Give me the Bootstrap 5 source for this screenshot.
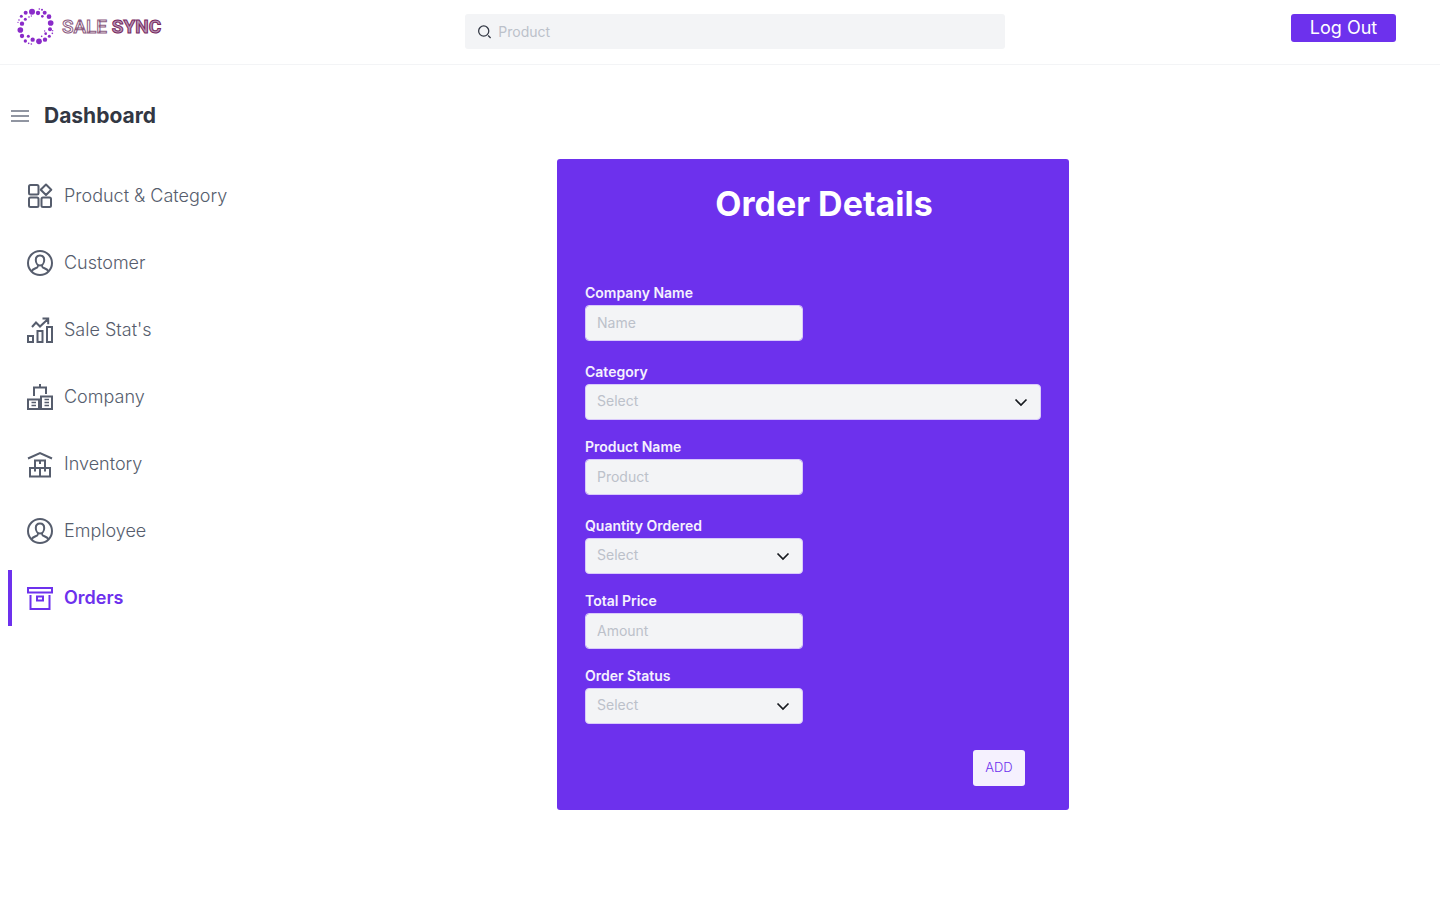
<!DOCTYPE html>
<html lang="en">
<head>
<meta charset="utf-8">
<meta name="viewport" content="width=device-width, initial-scale=1">
<title>Sale Sync - Orders</title>
<link href="https://cdn.jsdelivr.net/npm/bootstrap@5.3.0/dist/css/bootstrap.min.css" rel="stylesheet">
<style>
  :root { --brand: #6d31ed; --ink: #565d6d; --field: #f3f4f6; --hint: #bcc1ca; }
  body { font-family: Inter, "Liberation Sans", sans-serif; color: #323743; background: #fff; }
  .topbar { display: grid; grid-template-columns: 31fr 36fr 29fr; min-height: 65px; border-bottom: 1px solid #f3f4f6; }
  .brand-link { padding: 8px 0 0 17px; gap: 7px; align-self: start; height: 46px; }
  .wordmark { font: 500 19px/36px Roboto, sans-serif; color: #fff; -webkit-text-stroke: 1px #8b5a80; }
  .wordmark b { color: #b995b4; -webkit-text-stroke-color: #75285f; }
  .search-box { margin-top: 14px; height: 35px; background: var(--field); border-radius: 3px; padding: 0 12px; gap: 6px; }
  .form-control, .form-select { font-size: 14px; line-height: 22px; color: #171a1f; }
  .form-control::placeholder { color: var(--hint); opacity: 1; }
  .search-box .form-control { background: transparent; }
  .btn-logout { margin: 14px 44px 0 0; width: 105px; height: 28px; padding: 0; font-size: 18px; line-height: 26px; font-weight: 400; border-radius: 3px; border: 0; color: #fff; background: var(--brand); }
  .btn-logout:hover { background: #5a1fd6; color: #fff; }
  .sidebar { width: 272px; padding: 36px 8px 0; }
  .side-title { font-size: 21px; line-height: 30px; font-weight: 700; margin: 0; }
  .menu-btn { width: 24px; height: 24px; padding: 0; border: 0; line-height: 0; }
  .side-head { gap: 12px; margin-bottom: 37px; }
  .side-nav { gap: 11px; }
  .side-nav .nav-link { height: 56px; padding: 0 0 2px 14px; gap: 10px; border-left: 4px solid transparent; color: var(--ink); font-size: 18px; font-weight: 300; }
  .side-nav .nav-link.active { color: var(--brand); border-color: var(--brand); font-weight: 600; }
  .side-nav svg { width: 28px; height: 28px; margin-top: 2px; flex: none; fill: none; stroke: currentColor; stroke-width: 2; }
  .content { padding: 94px 86px 90px 0; }
  .order-card { width: 100%; max-width: 512px; background: var(--brand); border: 0; border-radius: 3px; padding: 20px 28px 24px; }
  .order-card h1 { font-size: 34px; line-height: 50px; font-weight: 700; color: #fff; margin: 0 0 53px; padding-left: 22px; }
  .order-card .form-label { display: block; margin: 0 0 2px; font-size: 14px; line-height: 21px; font-weight: 600; color: #f5f1fe; }
  .order-card .form-control, .order-card .form-select { height: 36px; padding: 0 11px 2px; border: 1px solid #d9c9fb; border-radius: 4px; background-color: var(--field); }
  .order-card .form-select { color: var(--hint); background-size: 14px 14px; background-position: right 12px center;
    background-image: url("data:image/svg+xml,%3Csvg xmlns='http://www.w3.org/2000/svg' viewBox='0 0 14 14'%3E%3Cpath fill='none' stroke='%23171a1f' stroke-width='1.7' d='M1.5 4.5 7 10l5.5-5.5'/%3E%3C/svg%3E"); }
  .half { width: 218px; max-width: 100%; }
  .gap-after { margin-bottom: 16px; }
  .gap-after-lg { margin-bottom: 20px; }
  .btn-add { width: 52px; height: 36px; padding: 0; margin: 26px 16px 0 0; font-size: 13px; font-weight: 300; color: var(--brand); background: #f5f1fe; border: 0; border-radius: 3px; }
  .btn-add:hover { background: #e5dafc; color: var(--brand); }
</style>
</head>
<body>
<header class="topbar">
  <a href="#" class="brand-link d-flex align-items-center text-decoration-none">
    <svg width="38" height="38" viewBox="51 24 114 114" fill="#8a2bc9" aria-hidden="true">
      <circle cx="96" cy="35" r="9"/><circle cx="152" cy="69" r="8.5"/><circle cx="61" cy="90" r="8.5"/><circle cx="117" cy="124" r="8.5"/>
      <circle cx="77" cy="38" r="6"/><circle cx="114" cy="39" r="6.5"/><circle cx="147" cy="50" r="7"/><circle cx="66" cy="71" r="6.5"/><circle cx="150" cy="88" r="6"/><circle cx="66" cy="108" r="6.5"/><circle cx="98" cy="119" r="6.5"/><circle cx="135" cy="119" r="6.5"/><circle cx="76" cy="123" r="5"/><circle cx="134" cy="38" r="6"/>
      <circle cx="64" cy="49" r="4.5"/><circle cx="76" cy="58" r="4.5"/><circle cx="127" cy="49" r="4"/><circle cx="148" cy="109" r="4.5"/><circle cx="137" cy="101" r="4"/><circle cx="85" cy="109" r="4.5"/>
      <circle cx="118" cy="27" r="2.5"/><circle cx="126" cy="29" r="3"/><circle cx="57" cy="60" r="2.5"/><circle cx="54" cy="67" r="2"/><circle cx="87" cy="51" r="2.5"/><circle cx="94" cy="48" r="2"/><circle cx="158" cy="92" r="2"/><circle cx="157" cy="100" r="2.5"/><circle cx="125" cy="109" r="2.5"/><circle cx="134" cy="93" r="2"/><circle cx="86" cy="130" r="2.5"/><circle cx="94" cy="132" r="2.5"/>
    </svg>
    <span class="wordmark">SALE <b>SYNC</b></span>
  </a>
  <form class="search-box d-flex align-items-center" role="search">
    <svg width="16" height="16" viewBox="0 0 16 16" fill="none" stroke="#323743" stroke-width="1.3" aria-hidden="true"><circle cx="7" cy="7" r="5.3"/><path d="M11.6 11.6 14.2 14.2"/></svg>
    <input type="search" class="form-control border-0 shadow-none p-0" placeholder="Product" aria-label="Search products">
  </form>
  <div class="text-end"><button type="button" class="btn btn-logout">Log Out</button></div>
</header>

<div class="d-flex">
  <aside class="sidebar flex-shrink-0">
    <div class="side-head d-flex align-items-center">
      <button type="button" class="btn menu-btn" aria-label="Toggle menu"><svg width="24" height="24" viewBox="0 0 24 24" fill="none" stroke="#9095a1" stroke-width="2" aria-hidden="true"><path d="M3 7h18M3 12h18M3 17h18"/></svg></button>
      <h2 class="side-title">Dashboard</h2>
    </div>
    <nav class="side-nav nav flex-column" aria-label="Main">
      <a class="nav-link d-flex align-items-center" href="#"><svg viewBox="0 0 28 28" aria-hidden="true"><rect x="3" y="3" width="9.5" height="9.5" rx="1.5"/><rect x="3" y="15.5" width="9.5" height="9.5" rx="1.5"/><rect x="15.500" y="15.5" width="9.5" height="9.5" rx="1.5"/><path stroke-linejoin="round" d="M20 2.500 25.300 7.700 20 13 14.700 7.700Z"/></svg>Product &amp; Category</a>
      <a class="nav-link d-flex align-items-center" href="#"><svg viewBox="0 0 28 28" aria-hidden="true"><circle cx="14" cy="14" r="12"/><path d="M14 6.500c-2.700 0-4.200 1.800-4.200 4.500 0 3.200 1.900 5.500 4.200 5.500s4.200-2.300 4.200-5.500c0-2.700-1.500-4.500-4.200-4.500ZM5.500 22.200c1.200-2 3.600-2.600 5.500-3.600.8-.5 1-1.200 1-2.600M22.500 22.200c-1.200-2-3.600-2.600-5.500-3.600-.8-.5-1-1.200-1-2.600"/></svg>Customer</a>
      <a class="nav-link d-flex align-items-center" href="#"><svg viewBox="0 0 28 28" aria-hidden="true"><path d="M2 20h5v6H2ZM11.500 15h5v11h-5ZM21 11h5v15h-5ZM6 11l4-4.500 4 4L22 3M16.500 2.500H22.200V8.200"/></svg>Sale Stat's</a>
      <a class="nav-link d-flex align-items-center" href="#"><svg viewBox="0 0 28 28" aria-hidden="true"><path d="M2 16.500h11V26H2ZM15 13.500h11V26H15ZM14 1v3M8 13V4.500H20V11M1 26H27"/><path stroke-width="1.5" d="M5.500 19.500H10M5.500 22.500H10M18.500 16.500H23M18.500 19.500H23M18.500 22.500H23"/></svg>Company</a>
      <a class="nav-link d-flex align-items-center" href="#"><svg viewBox="0 0 28 28" aria-hidden="true"><path d="M2 8.500 14 3 26 8.500M9 18V10.500H19V18M4 18H24V26.500H4ZM14 18V26.500M14 10.500V14M9 18V21.500M19 18V21.500"/></svg>Inventory</a>
      <a class="nav-link d-flex align-items-center" href="#"><svg viewBox="0 0 28 28" aria-hidden="true"><circle cx="14" cy="14" r="12"/><path d="M14 6.500c-2.700 0-4.200 1.800-4.200 4.500 0 3.200 1.900 5.500 4.200 5.500s4.200-2.300 4.200-5.500c0-2.700-1.500-4.500-4.200-4.500ZM5.500 22.200c1.200-2 3.600-2.600 5.500-3.600.8-.5 1-1.200 1-2.600M22.500 22.200c-1.200-2-3.600-2.600-5.500-3.600-.8-.5-1-1.200-1-2.600"/></svg>Employee</a>
      <a class="nav-link active d-flex align-items-center" href="#" aria-current="page"><svg viewBox="0 0 28 28" aria-hidden="true"><path d="M2 4H26V8.500H2ZM4.500 11V25H23.500V11M11 12.500H17V16.500H11Z"/></svg>Orders</a>
    </nav>
  </aside>

  <main class="content flex-grow-1 d-flex justify-content-center align-items-start">
    <form class="order-card card">
      <h1 class="text-center">Order Details</h1>
      <div class="half gap-after-lg">
        <label class="form-label" for="company">Company Name</label>
        <input type="text" class="form-control" id="company" placeholder="Name">
      </div>
      <div class="gap-after">
        <label class="form-label" for="category">Category</label>
        <select class="form-select" id="category"><option>Select</option></select>
      </div>
      <div class="half gap-after-lg">
        <label class="form-label" for="product">Product Name</label>
        <input type="text" class="form-control" id="product" placeholder="Product">
      </div>
      <div class="half gap-after">
        <label class="form-label" for="quantity">Quantity Ordered</label>
        <select class="form-select" id="quantity"><option>Select</option></select>
      </div>
      <div class="half gap-after">
        <label class="form-label" for="price">Total Price</label>
        <input type="text" class="form-control" id="price" placeholder="Amount">
      </div>
      <div class="half">
        <label class="form-label" for="status">Order Status</label>
        <select class="form-select" id="status"><option>Select</option></select>
      </div>
      <div class="text-end"><button type="submit" class="btn btn-add">ADD</button></div>
    </form>
  </main>
</div>
<script src="https://cdn.jsdelivr.net/npm/bootstrap@5.3.0/dist/js/bootstrap.bundle.min.js"></script>
</body>
</html>
